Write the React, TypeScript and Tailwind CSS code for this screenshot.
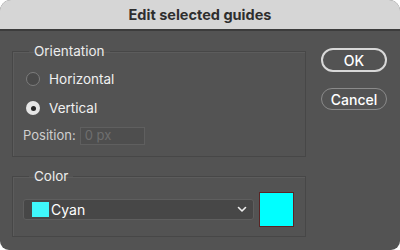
import React from "react";

export default function App() {
  return (
    <div className="w-[400px] h-[250px] bg-white" style={{ fontFamily: "Inter, 'Liberation Sans', sans-serif" }}>
      <div className="w-[400px] h-[250px] rounded-t-[11px] rounded-b-[9px] overflow-hidden bg-[#535353] flex flex-col">
        <div className="h-[31px] bg-[#d6d6d6] border-b-2 border-[#3c3c3c] flex items-center justify-center">
          <span className="text-[14.5px] font-bold text-[#2e2e2e]">Edit selected guides</span>
        </div>
        <div className="flex pt-[12px]">
          <div className="pl-[12px] w-[306px] flex flex-col">
            <fieldset className="border border-[#474747] shadow-[inset_1px_1px_0_#5c5c5c] pl-[10px] pr-[10px] pt-[9px] pb-[9px]">
              <legend className="ml-[6px] px-[5px] text-[13.5px] leading-[16px] text-[#ececec]">Orientation</legend>
              <div className="h-[22px] flex items-center pl-[3px]">
                <span className="w-[14px] h-[14px] rounded-full border border-[#7c7c7c] bg-[#4a4a4a]" />
                <span className="ml-[9px] text-[13.5px] text-[#f0f0f0]">Horizontal</span>
              </div>
              <div className="h-[22px] mt-[7px] flex items-center pl-[3px]">
                <span className="w-[14px] h-[14px] rounded-full bg-[#e6e6e6] flex items-center justify-center">
                  <span className="w-[5px] h-[5px] rounded-full bg-[#262626]" />
                </span>
                <span className="ml-[9px] text-[13.5px] text-[#f0f0f0]">Vertical</span>
              </div>
              <div className="h-[22px] mt-[6px] flex items-center">
                <span className="text-[13px] text-[#cfcfcf]">Position:</span>
                <div className="ml-[4px] w-[65px] h-[18px] border border-[#5f5f5f] bg-[#4e4e4e] flex items-center pl-[4px]">
                  <span className="text-[13px] text-[#6e6e6e]">0 px</span>
                </div>
              </div>
            </fieldset>
            <fieldset className="mt-[11px] border border-[#474747] shadow-[inset_1px_1px_0_#5c5c5c] pl-[10px] pr-[11px] pt-[8px] pb-[9px]">
              <legend className="ml-[6px] px-[5px] text-[13.5px] leading-[16px] text-[#ececec]">Color</legend>
              <div className="flex items-center">
                <div className="w-[231px] h-[21px] rounded-[3px] border border-[#5e5e5e] bg-[#474747] flex items-center pl-[8px] pr-[6px]">
                  <span className="w-[17px] h-[15px] bg-[#3ff8fb]" />
                  <span className="ml-[2px] text-[14px] text-white">Cyan</span>
                  <svg className="ml-auto" width="10" height="7" viewBox="0 0 10 7">
                    <path d="M1.5 1.5 L5 5 L8.5 1.5" stroke="#eeeeee" strokeWidth="1.6" fill="none" strokeLinecap="round" strokeLinejoin="round" />
                  </svg>
                </div>
                <div className="ml-[5px] w-[35px] h-[35px] border border-[#5a2424] bg-[#00ffff]" />
              </div>
            </fieldset>
          </div>
          <div className="ml-[15px] pt-[5px] flex flex-col">
            <div className="w-[66px] h-[24px] rounded-full border-2 border-[#d8d8d8] flex items-center justify-center">
              <span className="text-[14px] font-medium text-white">OK</span>
            </div>
            <div className="mt-[16px] w-[66px] h-[22px] rounded-full border border-[#8a8a8a] flex items-center justify-center">
              <span className="text-[14px] font-medium text-white">Cancel</span>
            </div>
          </div>
        </div>
      </div>
    </div>
  );
}
